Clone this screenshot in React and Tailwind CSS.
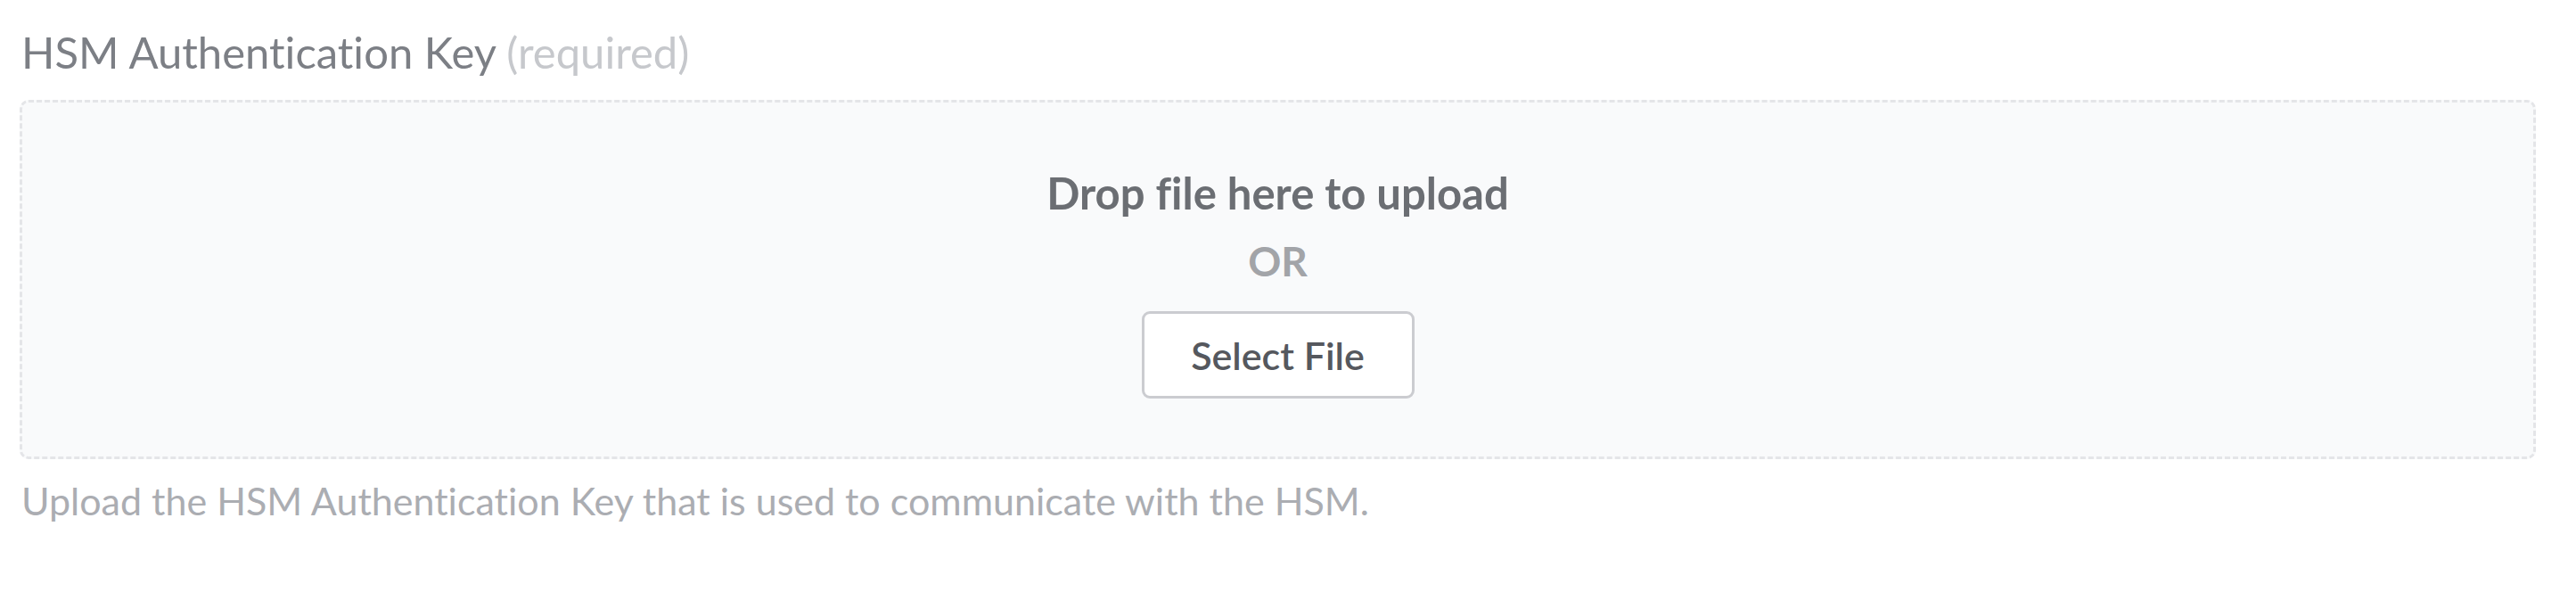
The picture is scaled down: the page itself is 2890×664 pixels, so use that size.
export default function App() {
  const font = { fontFamily: "Lato, 'Open Sans', sans-serif" };
  return (
    <div className="w-[2890px] h-[664px] bg-white pl-[22px] pr-[45px] pt-[30px] [font-variant-ligatures:none]" style={font}>
      <div className="text-[49px] leading-[56px] text-[#7c7f85] pl-[2px]">
        HSM Authentication Key <span className="text-[#c6c8cc]">(required)</span>
      </div>
      <div className="mt-[26px] h-[403px] rounded-[10px] border-[3px] border-dashed border-[#e4e5e8] bg-[#f9fafb] flex flex-col items-center pt-[73px]">
        <div className="text-[49px] leading-[56px] font-bold text-[#6b6e73]">Drop file here to upload</div>
        <div className="mt-[21px] text-[46px] leading-[56px] font-bold text-[#a2a4a8]">OR</div>
        <button className="mt-[28px] w-[306px] h-[98px] rounded-[9px] border-[3px] border-[#cbccd0] bg-white flex items-center justify-center pt-[2px] text-[43px] leading-[56px] text-[#55585e] font-semibold">
          Select File
        </button>
      </div>
      <div className="mt-[19px] text-[43px] leading-[56px] text-[#abadb2] pl-[2px]">
        Upload the HSM Authentication Key that is used to communicate with the HSM.
      </div>
    </div>
  );
}
